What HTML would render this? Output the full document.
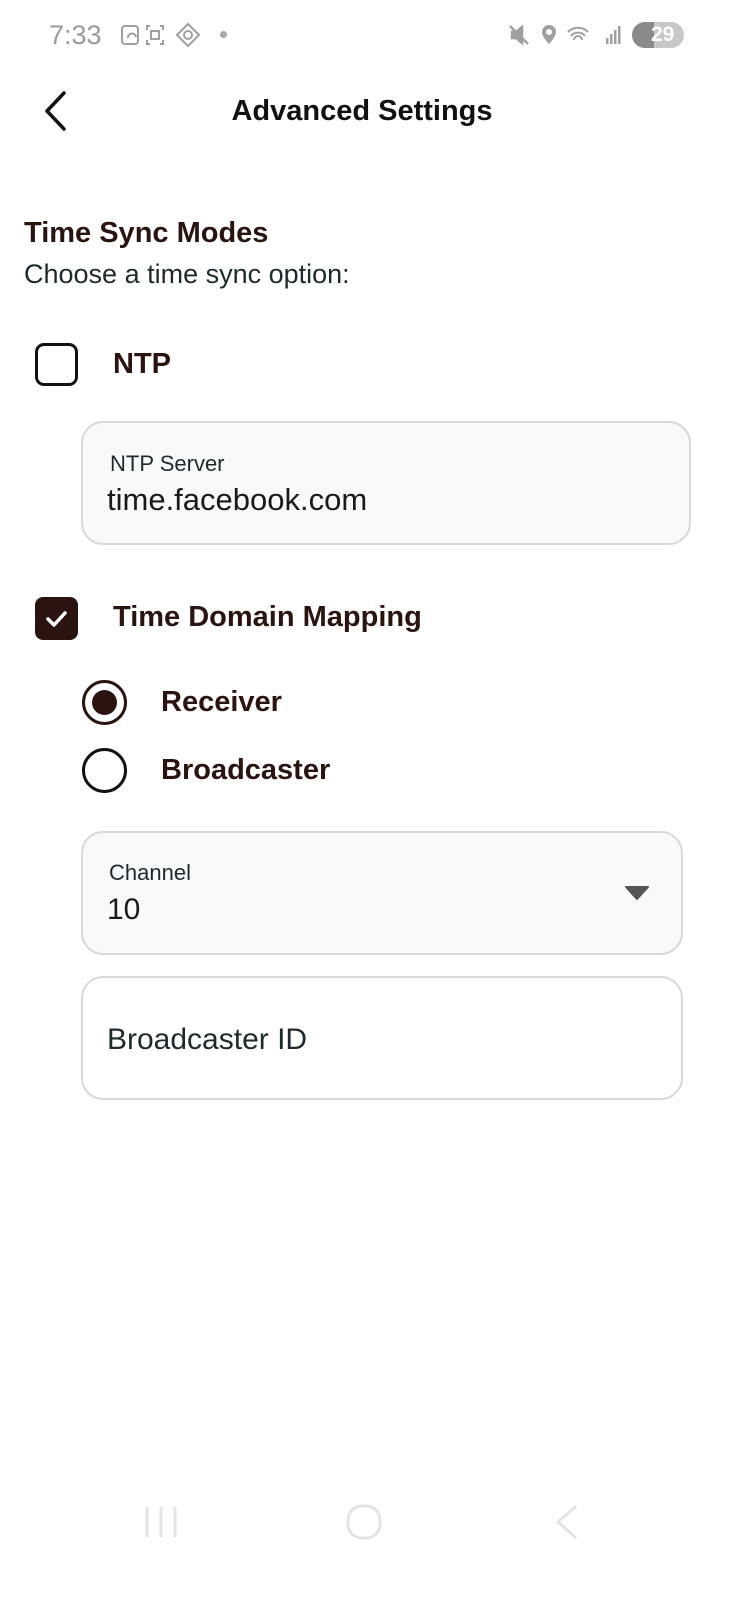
<!DOCTYPE html>
<html><head><meta charset="utf-8"><style>
*{margin:0;padding:0;box-sizing:border-box}
body{width:738px;height:1600px;background:#fff;font-family:"Liberation Sans",sans-serif;position:relative;overflow:hidden;color:#2b1410}
.a{position:absolute;white-space:nowrap;line-height:1}
.box{position:absolute;border:2px solid #d6d8da;border-radius:22px;background:#f7f9fb}
</style></head><body>
<div class="a" style="left:49px;top:22px;font-size:27px;color:#9a9a9a">7:33</div>
<svg class="a" style="left:120px;top:22px" width="90" height="26" viewBox="0 0 90 26" fill="none" stroke="#a0a0a0" stroke-width="2">
<rect x="2" y="4" width="16" height="18" rx="3"/><path d="M8 16a4 4 0 0 1 8-1"/>
<path d="M30 4h-3v4M40 4h3v4M30 22h-3v-4M40 22h3v-4"/><rect x="31" y="9" width="8" height="8"/>
<path d="M68 2l11 11-11 11-11-11z"/><circle cx="68" cy="13" r="4"/>
</svg>
<div class="a" style="left:220px;top:31px;width:7px;height:7px;border-radius:50%;background:#a8a8a8"></div>
<svg class="a" style="left:508px;top:22px" width="130" height="26" viewBox="0 0 130 26" fill="#a0a0a0">
<path d="M4 10h4l6-5v16l-6-5H4z M2 4l18 18" stroke="#a0a0a0" stroke-width="2.5"/>
<path d="M41 3a7 7 0 0 1 7 7c0 5-7 12-7 12s-7-7-7-12a7 7 0 0 1 7-7zm0 4a3 3 0 1 0 0 6a3 3 0 1 0 0-6z"/>
<path d="M60 10a14 14 0 0 1 20 0M63 14a9 9 0 0 1 14 0M66 18a4 4 0 0 1 8 0" stroke="#a0a0a0" stroke-width="2" fill="none"/>
<rect x="98" y="16" width="2.5" height="6"/><rect x="102" y="12" width="2.5" height="10"/><rect x="106" y="8" width="2.5" height="14"/><rect x="110" y="4" width="2.5" height="18"/>
</svg>
<div class="a" style="left:632px;top:22px;width:52px;height:26px;border-radius:13px;background:#c8c8c8"></div>
<div class="a" style="left:632px;top:22px;width:22px;height:26px;border-radius:13px 0 0 13px;background:#8a8a8a"></div>
<div class="a" style="left:651px;top:24px;font-size:21px;font-weight:bold;color:#fff">29</div>
<svg class="a" style="left:40px;top:90px" width="30" height="42" viewBox="0 0 30 42"><path d="M24 3L7 21l17 18" fill="none" stroke="#111" stroke-width="3.5" stroke-linecap="round" stroke-linejoin="round"/></svg>
<div class="a" style="left:0;width:724px;text-align:center;top:97px;font-size:29px;font-weight:bold;color:#111">Advanced Settings</div>
<div class="a" style="left:24px;top:219px;font-size:29px;font-weight:bold">Time Sync Modes</div>
<div class="a" style="left:24px;top:261px;font-size:27px;color:#1e2a2e">Choose a time sync option:</div>
<div class="a" style="left:35px;top:343px;width:43px;height:43px;border:3px solid #111;border-radius:9px"></div>
<div class="a" style="left:113px;top:350px;font-size:29px;font-weight:bold">NTP</div>
<div class="box" style="left:81px;top:421px;width:610px;height:124px"></div>
<div class="a" style="left:110px;top:453px;font-size:22px;color:#1e2a2e">NTP Server</div>
<div class="a" style="left:107px;top:484px;font-size:31px;color:#1a1a1a">time.facebook.com</div>
<div class="a" style="left:35px;top:597px;width:43px;height:43px;background:#2b1410;border-radius:8px"></div>
<svg class="a" style="left:35px;top:597px" width="43" height="43" viewBox="0 0 43 43"><path d="M13 22l6 6 11-12" fill="none" stroke="#fff" stroke-width="3.5" stroke-linecap="round" stroke-linejoin="round"/></svg>
<div class="a" style="left:113px;top:603px;font-size:29px;font-weight:bold">Time Domain Mapping</div>
<div class="a" style="left:82px;top:680px;width:45px;height:45px;border:3.5px solid #2b1410;border-radius:50%"></div>
<div class="a" style="left:92px;top:690px;width:25px;height:25px;background:#2b1410;border-radius:50%"></div>
<div class="a" style="left:161px;top:688px;font-size:29px;font-weight:bold">Receiver</div>
<div class="a" style="left:82px;top:748px;width:45px;height:45px;border:3.5px solid #111;border-radius:50%"></div>
<div class="a" style="left:161px;top:756px;font-size:29px;font-weight:bold">Broadcaster</div>
<div class="box" style="left:81px;top:831px;width:602px;height:124px"></div>
<div class="a" style="left:109px;top:862px;font-size:22px;color:#1e2a2e">Channel</div>
<div class="a" style="left:107px;top:895px;font-size:30px;color:#1a1a1a">10</div>
<svg class="a" style="left:625px;top:886px" width="24" height="14" viewBox="0 0 24 14"><path d="M1 1h22L12 13z" fill="#555" stroke="#555" stroke-linejoin="round" stroke-width="2"/></svg>
<div class="box" style="left:81px;top:976px;width:602px;height:124px;background:#fff"></div>
<div class="a" style="left:107px;top:1025px;font-size:30px;color:#1e2a2e">Broadcaster ID</div>
<svg class="a" style="left:140px;top:1500px" width="460" height="44" viewBox="0 0 460 44" fill="none" stroke="#e4e4e4" stroke-width="3">
<path d="M7 7v30M21 7v30M35 7v30"/>
<rect x="208" y="6" width="32" height="32" rx="14"/>
<path d="M436 6L418 22l18 16"/>
</svg>
</body></html>
